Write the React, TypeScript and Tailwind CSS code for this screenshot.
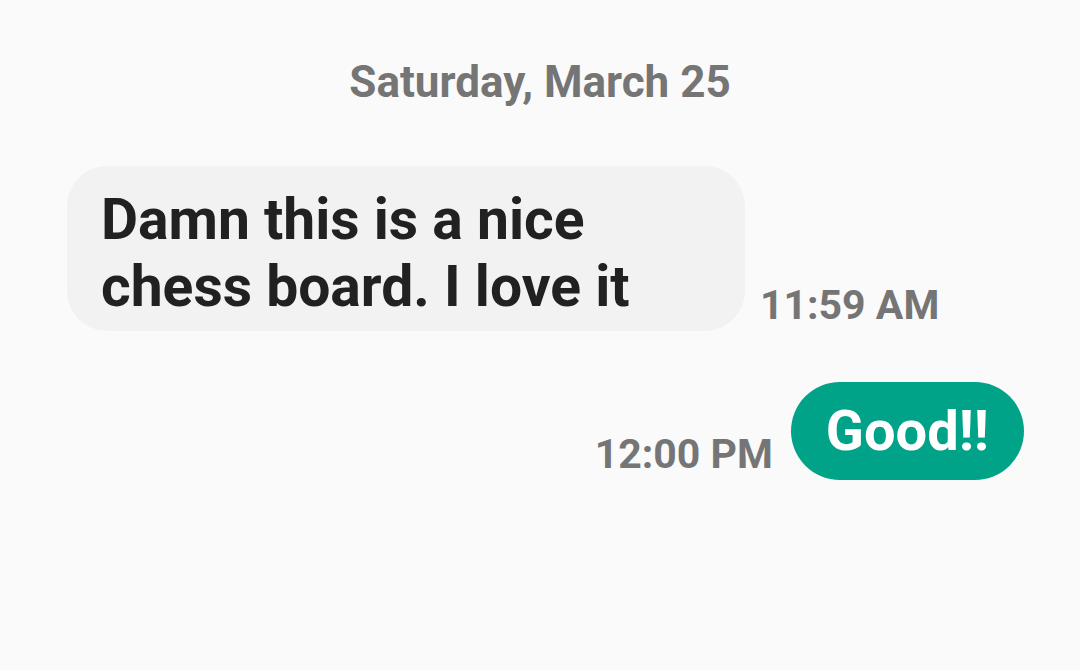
export default function App() {
  return (
    <div className="w-[1080px] h-[670px] bg-[#fafafa] overflow-hidden font-['Roboto',sans-serif]">
      {/* Date header */}
      <div className="pt-[56px] text-center text-[44px] font-bold leading-[52px] text-[#757575]">
        Saturday, March 25
      </div>

      {/* Incoming */}
      <div className="mt-[58px] flex items-end pl-[67px]">
        <div className="w-[678px] h-[165px] rounded-[40px] bg-[#f2f2f2] pl-[34px] pt-[20px] text-[57px] font-bold leading-[67px] text-[#212121]">
          Damn this is a nice
          <br />
          chess board. I love it
        </div>
        <div className="ml-[15px] mb-[2px] text-[41px] font-bold leading-[48px] text-[#757575]">
          11:59 AM
        </div>
      </div>

      {/* Outgoing */}
      <div className="mt-[51px] flex items-end justify-end pr-[56px]">
        <div className="mr-[18px] mb-[2px] text-[41px] font-bold leading-[48px] text-[#757575]">
          12:00 PM
        </div>
        <div className="h-[98px] rounded-full bg-[#00a388] px-[35px] flex items-center text-[56px] font-bold text-white">
          Good!!
        </div>
      </div>
    </div>
  );
}
